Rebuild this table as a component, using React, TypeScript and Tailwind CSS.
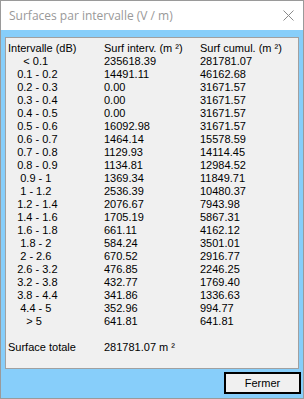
const rows: [string, string, string][] = [
  ["     < 0.1", "235618.39", "281781.07"],
  ["   0.1 - 0.2", "14491.11", "46162.68"],
  ["   0.2 - 0.3", "0.00", "31671.57"],
  ["   0.3 - 0.4", "0.00", "31671.57"],
  ["   0.4 - 0.5", "0.00", "31671.57"],
  ["   0.5 - 0.6", "16092.98", "31671.57"],
  ["   0.6 - 0.7", "1464.14", "15578.59"],
  ["   0.7 - 0.8", "1129.93", "14114.45"],
  ["   0.8 - 0.9", "1134.81", "12984.52"],
  ["    0.9 - 1", "1369.34", "11849.71"],
  ["    1 - 1.2", "2536.39", "10480.37"],
  ["   1.2 - 1.4", "2076.67", "7943.98"],
  ["   1.4 - 1.6", "1705.19", "5867.31"],
  ["   1.6 - 1.8", "661.11", "4162.12"],
  ["    1.8 - 2", "584.24", "3501.01"],
  ["    2 - 2.6", "670.52", "2916.77"],
  ["   2.6 - 3.2", "476.85", "2246.25"],
  ["   3.2 - 3.8", "432.77", "1769.40"],
  ["   3.8 - 4.4", "341.86", "1336.63"],
  ["    4.4 - 5", "352.96", "994.77"],
  ["      > 5", "641.81", "641.81"],
];

const App = () => {
  return (
    <div className="w-[304px] h-[399px] overflow-hidden flex flex-col bg-white border border-[#9a9a9a] font-['Liberation_Sans',Arial,sans-serif] text-[11px] text-black">
      {/* Title bar */}
      <div className="h-[29px] flex items-center justify-between pl-[8px] pr-[9px] bg-white">
        <span className="font-['Open_Sans','Noto_Sans',sans-serif] text-[12px] text-[#999999]">
          Surfaces par intervalle (V / m)
        </span>
        <svg width="11" height="11" viewBox="0 0 11 11">
          <path d="M0.5 0.5 L10.5 10.5 M10.5 0.5 L0.5 10.5" stroke="#8a8a8a" strokeWidth="1" />
        </svg>
      </div>

      {/* Body */}
      <div className="flex-1 flex flex-col bg-[#87cefa] pl-[4px] pr-[4px] pt-[7px]">
        <div className="h-[332px] bg-[#f0f0f0] border border-[#a0a0a0] pl-[2px] pt-[4px]">
          <div className="grid grid-cols-[96px_96px_1fr] leading-[13px]">
            <div className="h-[13px]">Intervalle (dB)</div>
            <div className="h-[13px]">Surf interv. (m ²)</div>
            <div className="h-[13px]">Surf cumul. (m ²)</div>
            {rows.map(([a, b, c], i) => (
              <div key={i} className="contents">
                <div className="h-[13px] whitespace-pre">{a}</div>
                <div className="h-[13px]">{b}</div>
                <div className="h-[13px]">{c}</div>
              </div>
            ))}
            <div className="h-[13px]" />
            <div className="h-[13px]" />
            <div className="h-[13px]" />
            <div className="h-[13px]">Surface totale</div>
            <div className="h-[13px] col-span-2">281781.07 m ²</div>
          </div>
        </div>

        <div className="flex justify-end mt-[3px] pr-[-2px]">
          <button className="w-[77px] h-[22px] mr-[-2px] bg-[#f0f0f0] border-2 border-black text-[11px] leading-none">
            Fermer
          </button>
        </div>
      </div>
    </div>
  );
};

export default App;
